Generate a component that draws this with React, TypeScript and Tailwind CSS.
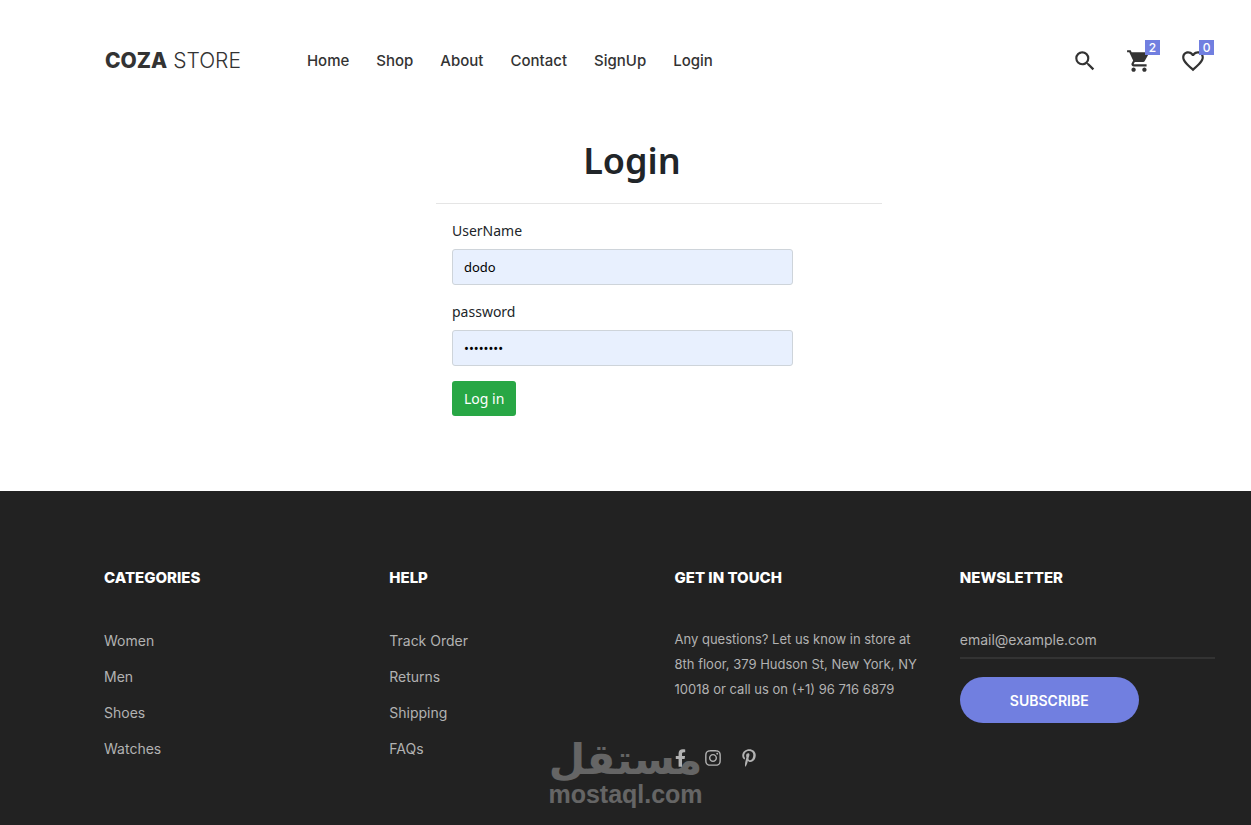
import React from "react";
import { MdFavoriteBorder, MdSearch, MdShoppingCart } from "react-icons/md";
import { FaFacebookF, FaInstagram, FaPinterestP } from "react-icons/fa";

const navLinks = ["Home", "Shop", "About", "Contact", "SignUp", "Login"];
const categories = ["Women", "Men", "Shoes", "Watches"];
const helpLinks = ["Track Order", "Returns", "Shipping", "FAQs"];

const Badge = ({ count }: { count: number }) => (
  <span className="absolute -top-2 -right-2 flex h-[15px] w-[15px] items-center justify-center bg-[#717fe0] text-xs font-medium text-white">
    {count}
  </span>
);

const Header = () => (
  <header className="flex h-[122px] items-center pr-[37px] pl-[105px] text-[#333]">
    <a href="#" className="mr-[66px] text-[21px] whitespace-nowrap">
      <span className="font-extrabold">COZA</span>{" "}
      <span className="font-light">STORE</span>
    </a>
    <nav className="flex gap-[27px] text-[15px] font-medium">
      {navLinks.map((link) => (
        <a key={link} href="#">
          {link}
        </a>
      ))}
    </nav>
    {/* search, cart and wishlist */}
    <div className="ml-auto flex items-center gap-[28px] pr-2">
      <button type="button" aria-label="Search">
        <MdSearch size={26} />
      </button>
      <a href="#" aria-label="Cart" className="relative">
        <MdShoppingCart size={26} />
        <Badge count={2} />
      </a>
      <a href="#" aria-label="Wishlist" className="relative">
        <MdFavoriteBorder size={26} />
        <Badge count={0} />
      </a>
    </div>
  </header>
);

const inputClass =
  "mb-[15px] h-[36px] w-full rounded-[3px] border border-[#ced4da] bg-[#e8f0fe] px-[11px] text-[13px] text-black";
const labelClass = "mb-[7px] block text-[14px] leading-[23px]";

const LoginForm = () => (
  <main className="ml-[436px] h-[369px] max-w-[446px] font-['Noto_Sans'] text-[#212529]">
    <h1 className="border-b border-[#e5e5e5] pt-[14px] pr-[54px] pb-[17px] text-center text-[36px] leading-[50px] font-semibold">
      Login
    </h1>
    <form
      className="pt-[15px] pr-[89px] pl-4"
      onSubmit={(e) => e.preventDefault()}
    >
      <label htmlFor="username" className={labelClass}>
        UserName
      </label>
      <input
        id="username"
        type="text"
        defaultValue="dodo"
        className={inputClass}
      />
      <label htmlFor="password" className={labelClass}>
        password
      </label>
      <input
        id="password"
        type="password"
        defaultValue="password"
        className={inputClass}
      />
      <button
        type="submit"
        className="h-[35px] rounded-[3px] bg-[#28a745] px-3 text-[14px] text-white"
      >
        Log in
      </button>
    </form>
  </main>
);

interface FooterColumnProps {
  title: string;
  children: React.ReactNode;
}

const FooterColumn = ({ title, children }: FooterColumnProps) => (
  <div className="px-[15px]">
    <h4 className="mb-[37px] text-[15px] leading-[24px] font-extrabold text-white">
      {title}
    </h4>
    {children}
  </div>
);

const LinkList = ({ links }: { links: string[] }) => (
  <ul className="text-[14px]">
    {links.map((link) => (
      <li key={link} className="h-[36px] leading-[27px]">
        <a href="#">{link}</a>
      </li>
    ))}
  </ul>
);

const Footer = () => (
  <footer className="relative flex-1 bg-[#222] pt-[75px] pr-[21px] pl-[89px] text-[13px] text-[#b2b2b2]">
    <div className="grid grid-cols-4">
      <FooterColumn title="CATEGORIES">
        <LinkList links={categories} />
      </FooterColumn>
      <FooterColumn title="HELP">
        <LinkList links={helpLinks} />
      </FooterColumn>
      <FooterColumn title="GET IN TOUCH">
        <p className="leading-[25px]">
          Any questions? Let us know in store at 8th floor, 379 Hudson St, New
          York, NY 10018 or call us on (+1) 96 716 6879
        </p>
        <div className="mt-[47px] flex gap-[18px] text-[18px]">
          <a href="#" aria-label="Facebook">
            <FaFacebookF className="w-[11px]" />
          </a>
          <a href="#" aria-label="Instagram">
            <FaInstagram />
          </a>
          <a href="#" aria-label="Pinterest">
            <FaPinterestP />
          </a>
        </div>
      </FooterColumn>
      <FooterColumn title="NEWSLETTER">
        <form onSubmit={(e) => e.preventDefault()}>
          <input
            type="email"
            aria-label="Email"
            placeholder="email@example.com"
            className="mb-[18px] block h-[32px] w-full border-b-2 border-[#333] pb-[6px] text-[14px] placeholder:text-[#b2b2b2]"
          />
          <button
            type="submit"
            className="h-[46px] w-[179px] rounded-full bg-[#717fe0] text-[14px] font-semibold text-white"
          >
            SUBSCRIBE
          </button>
        </form>
      </FooterColumn>
    </div>
    {/* watermark */}
    <div className="pointer-events-none absolute bottom-[16px] left-1/2 flex -translate-x-1/2 flex-col items-center font-bold text-white opacity-30">
      <span lang="ar" className="font-['DejaVu_Sans'] text-[42px] leading-[38px]">
        مستقل
      </span>
      <span className="font-['Liberation_Sans'] text-[25px] leading-[30px]">
        mostaql.com
      </span>
    </div>
  </footer>
);

const App = () => (
  <div className="flex min-h-screen flex-col bg-white font-['Inter']">
    <Header />
    <LoginForm />
    <Footer />
  </div>
);

export default App;
